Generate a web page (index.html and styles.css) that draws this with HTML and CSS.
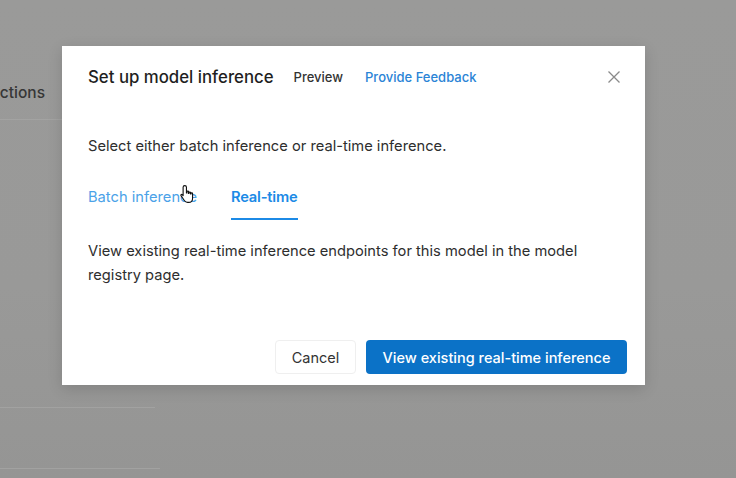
FILE: index.html
```html
<!DOCTYPE html>
<html lang="en">
<head>
<meta charset="utf-8">
<title>Set up model inference</title>
<link rel="stylesheet" href="styles.css">
</head>
<body>
<div class="page">
  <div class="table-head"><span class="col-actions">Actions</span></div>
  <div class="table-body">
    <div class="row-line row-line-a"></div>
    <div class="row-line row-line-b"></div>
  </div>
</div>

<div class="modal" role="dialog" aria-labelledby="modal-title">
  <div class="modal-header">
    <h2 id="modal-title" class="modal-title">Set up model inference</h2>
    <span class="preview">Preview</span>
    <a class="feedback" href="#">Provide Feedback</a>
    <button class="close" aria-label="Close">
      <svg width="14" height="14" viewBox="0 0 14 14"><path d="M1.5 1.5 L12.5 12.5 M12.5 1.5 L1.5 12.5" stroke="#8a8a8a" stroke-width="1.3" fill="none"/></svg>
    </button>
  </div>
  <p class="desc">Select either batch inference or real-time inference.</p>
  <div class="tabs">
    <span class="tab">Batch inference
      <svg class="cursor" width="18" height="20" viewBox="0 0 16 18"><path d="M6 1.5c.8 0 1.5.7 1.5 1.5V8H8V7c0-.8 1.4-.8 1.4 0v1.5h.4V7.8c0-.8 1.4-.8 1.4 0V9h.4v-.4c0-.8 1.4-.8 1.4 0V13c0 2-1.5 3.5-3.5 3.5H8.5c-1.3 0-2.2-.6-2.900-1.6L2.6 10.5c-.5-.7.4-1.6 1.1-1l.8 1V3c0-.8.7-1.5 1.5-1.5z" fill="#fff" stroke="#111" stroke-width="1" stroke-linejoin="round"/></svg>
    </span>
    <span class="tab tab-active">Real-time</span>
  </div>
  <p class="body-text">View existing real-time inference endpoints for this model in the model registry page.</p>
  <div class="footer">
    <button class="btn btn-cancel">Cancel</button>
    <button class="btn btn-primary">View existing real-time inference</button>
  </div>
</div>
</body>
</html>
```
FILE: styles.css
```css
* { box-sizing: border-box; }
html, body { margin: 0; padding: 0; }
body {
  width: 736px;
  height: 478px;
  overflow: hidden;
  background: linear-gradient(180deg, #9a9a99 0%, #999998 60%, #959594 100%);
  font-family: Inter, "Noto Sans", "Liberation Sans", sans-serif;
  position: relative;
}
.page {
  width: 100%;
  height: 100%;
  display: flex;
  flex-direction: column;
}
.table-head {
  height: 120px;
  padding-top: 82px;
  border-bottom: 1px solid #a3a3a2;
  width: 62px;
  overflow: hidden;
}
.col-actions {
  display: block;
  margin-left: -11px;
  font-size: 15.5px;
  font-weight: 500;
  color: #363636;
  line-height: 21px;
  white-space: nowrap;
}
.table-body {
  display: flex;
  flex-direction: column;
}
.row-line { height: 1px; background: #a2a2a1; }
.row-line-a { margin-top: 287px; width: 155px; }
.row-line-b { margin-top: 60px; width: 160px; }

.modal {
  position: absolute;
  left: 62px;
  top: 46px;
  width: 583px;
  height: 339px;
  background: #fff;
  box-shadow: 0 4px 14px rgba(0,0,0,0.14);
  padding: 20px 18px 11px 26px;
  display: flex;
  flex-direction: column;
}
.modal-header {
  display: flex;
  align-items: center;
  height: 22px;
}
.modal-title {
  margin: 0;
  font-size: 16.8px;
  font-weight: 500;
  color: #1f1f1f;
}
.preview {
  margin-left: 20px;
  font-size: 13px;
  font-weight: 500;
  color: #333;
}
.feedback {
  margin-left: 22px;
  font-size: 13px;
  font-weight: 500;
  color: #2a84d6;
  text-decoration: none;
}
.close {
  margin-left: auto;
  margin-right: 6px;
  border: 0;
  background: none;
  padding: 0;
  width: 14px;
  height: 14px;
  display: flex;
}
.desc {
  margin: 48px 0 0;
  font-size: 14.7px;
  line-height: 20px;
  color: #2e2e2e;
}
.tabs {
  margin-top: 31px;
  display: flex;
  gap: 34px;
}
.tab {
  position: relative;
  font-size: 14.7px;
  line-height: 20px;
  color: #4ba2e8;
  padding-bottom: 11px;
  border-bottom: 2px solid transparent;
}
.tab-active {
  color: #1c8ae6;
  font-weight: 600;
  letter-spacing: -0.2px;
  border-bottom-color: #1c8ae6;
}
.cursor {
  position: absolute;
  left: 90px;
  top: -3px;
}
.body-text {
  margin: 19px 0 0;
  font-size: 14.7px;
  line-height: 24px;
  color: #2e2e2e;
  max-width: 520px;
}
.footer {
  margin-top: auto;
  display: flex;
  justify-content: flex-end;
  gap: 10px;
}
.btn {
  height: 34px;
  font-family: inherit;
  font-size: 14.5px;
  border-radius: 4px;
  cursor: pointer;
}
.btn-cancel {
  width: 81px;
  background: #fff;
  border: 1px solid #efefef;
  color: #333;
}
.btn-primary {
  width: 261px;
  background: #0b72c7;
  border: 0;
  color: #fff;
  font-weight: 500;
}
```
